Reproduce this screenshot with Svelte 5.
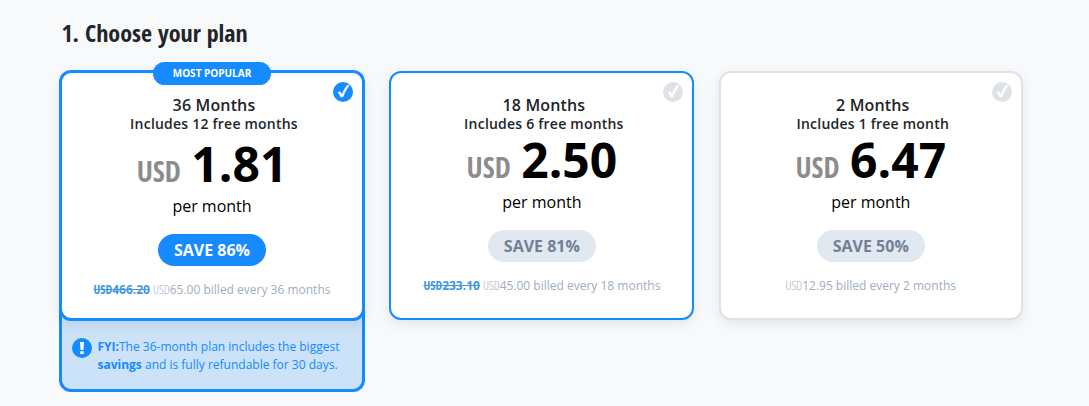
<script>
    const plans = [
        {
            title: "36 Months",
            bonus: "Includes 12 free months",
            price: "1.81",
            save: "SAVE 86%",
            oldPrice: "466.20",
            billed: "65.00 billed every 36 months",
            popular: true,
        },
        {
            title: "18 Months",
            bonus: "Includes 6 free months",
            price: "2.50",
            save: "SAVE 81%",
            oldPrice: "233.10",
            billed: "45.00 billed every 18 months",
            outlined: true,
        },
        {
            title: "2 Months",
            bonus: "Includes 1 free month",
            price: "6.47",
            save: "SAVE 50%",
            billed: "12.95 billed every 2 months",
        },
    ];

    let selected = $state(0);
</script>

<main>
    <h2>1. Choose your plan</h2>
    <div class="plans">
        {#each plans as plan, i}
            <div class="plan" class:popular={plan.popular}>
                <!-- svelte-ignore a11y_click_events_have_key_events, a11y_no_static_element_interactions -->
                <div
                    class="card"
                    class:outlined={plan.outlined}
                    class:selected={selected === i}
                    onclick={() => (selected = i)}
                >
                    {#if plan.popular}
                        <span class="ribbon">MOST POPULAR</span>
                    {/if}
                    <svg class="check" viewBox="0 0 20 20">
                        <circle cx="10" cy="10" r="10" />
                        <path d="M4.6 10.4 L7.1 9.3 L9 12.2 C10.3 8.5 12.2 5.3 14.2 3 L16.6 3.3 C13.9 6.7 11.8 10.5 10.2 15.1 L7.7 15.5 C7 13.5 6 11.8 4.6 10.4 Z" />
                    </svg>
                    <div class="title">{plan.title}</div>
                    <div class="bonus">{plan.bonus}</div>
                    <div class="price">
                        <span class="currency">USD</span>
                        <span class="amount">{plan.price}</span>
                    </div>
                    <div class="period">per month</div>
                    <div class="save">{plan.save}</div>
                    <div class="billing">
                        {#if plan.oldPrice}
                            <s><span class="unit">USD</span>{plan.oldPrice}</s>
                        {/if}
                        <span class="unit">USD</span>{plan.billed}
                    </div>
                </div>
                {#if plan.popular}
                    <div class="note">
                        <svg class="info" viewBox="0 0 20 20">
                            <circle cx="10" cy="10" r="10" />
                            <path d="M8 4 H12 L11.4 12 H8.6 Z M8.2 13.2 H11.8 V16 H8.2 Z" />
                        </svg>
                        <p>
                            <b>FYI:</b>The 36-month plan includes the biggest
                            <b>savings</b> and is fully refundable for 30 days.
                        </p>
                    </div>
                {/if}
            </div>
        {/each}
    </div>
</main>

<style>
    :global(body) {
        margin: 0;
        background: #f8f9fb;
    }
    main {
        box-sizing: border-box;
        height: 406px;
        padding: 15px 66px 0 59px;
        font-family: "Open Sans", sans-serif;
        color: #212529;
    }
    h2 {
        margin: 0 0 19px 2.5px;
        font: 700 24px/36px "Open Sans Condensed", "Open Sans", sans-serif;
    }
    .plans {
        display: grid;
        grid-template-columns: 306px 305px 304px;
        column-gap: 24.4px;
        align-items: start;
    }
    .plan {
        padding-top: 1px;
    }
    .popular {
        padding-top: 0;
    }
    .card {
        position: relative;
        z-index: 1;
        box-sizing: border-box;
        height: 249px;
        padding-top: 22px;
        display: flex;
        flex-direction: column;
        align-items: center;
        border: 2px solid #dee2e6;
        border-radius: 12px;
        background: #fff;
        box-shadow: 0 4px 12px rgba(0, 0, 0, 0.08);
        cursor: pointer;
    }
    .outlined {
        border-color: #168aff;
    }
    .popular .card {
        height: 251px;
        border-width: 3px;
    }
    .card.selected {
        border-color: #168aff;
    }
    .ribbon {
        position: absolute;
        top: -11px;
        left: 91px;
        width: 118px;
        border-radius: 12px;
        background: #168aff;
        color: #fff;
        font-size: 10px;
        font-weight: 700;
        line-height: 23px;
        text-align: center;
    }
    .check {
        position: absolute;
        top: 9px;
        right: 9px;
        width: 20px;
        height: 20px;
        fill: #dee2e6;
    }
    .selected .check,
    .info {
        fill: #168aff;
    }
    .check path,
    .info path {
        fill: #fff;
    }
    .title {
        padding-left: 4px;
        font-size: 16px;
        font-weight: 600;
        letter-spacing: 0.15px;
        line-height: 20px;
    }
    .bonus {
        padding-left: 4px;
        font-size: 14px;
        font-weight: 600;
        letter-spacing: 0.22px;
        line-height: 18px;
    }
    .price {
        margin-top: 3px;
        height: 48px;
        display: flex;
        align-items: baseline;
        gap: 10.5px;
        line-height: 48px;
    }
    .popular .price {
        margin-top: 7px;
    }
    .currency {
        color: #8c8c8c;
        font-family: "Open Sans Condensed", "Open Sans", sans-serif;
        font-size: 28.8px;
        font-weight: 700;
    }
    .amount {
        color: #000;
        font-size: 48px;
        font-weight: 700;
    }
    .period {
        margin-top: 6px;
        color: #000;
        font-size: 16px;
        line-height: 24px;
    }
    .save {
        margin-top: 16px;
        padding: 0 16px;
        border-radius: 16px;
        background: #e2e8f0;
        color: #718096;
        font-size: 16px;
        font-weight: 700;
        line-height: 32px;
    }
    .selected .save {
        background: #168aff;
        color: #fff;
    }
    .billing {
        margin-top: 15px;
        color: #a0aec0;
        font-size: 12px;
        line-height: 18px;
    }
    .billing s {
        color: #4299e1;
        font-weight: 700;
    }
    .unit {
        font-weight: 300;
        font-stretch: 75%;
    }
    .billing s .unit {
        font-weight: 700;
    }
    .note {
        box-sizing: border-box;
        height: 83px;
        margin-top: -12px;
        padding: 25px 10px 0;
        display: flex;
        align-items: flex-start;
        gap: 5.5px;
        border: 3px solid #168aff;
        border-top: 0;
        border-radius: 0 0 12px 12px;
        background: #cbe2f9;
        color: #168aff;
    }
    .info {
        flex: none;
        width: 20px;
        height: 20px;
        margin-top: 4px;
    }
    .note p {
        margin: 4px 0 0;
        font-size: 12px;
        line-height: 18px;
    }
</style>
